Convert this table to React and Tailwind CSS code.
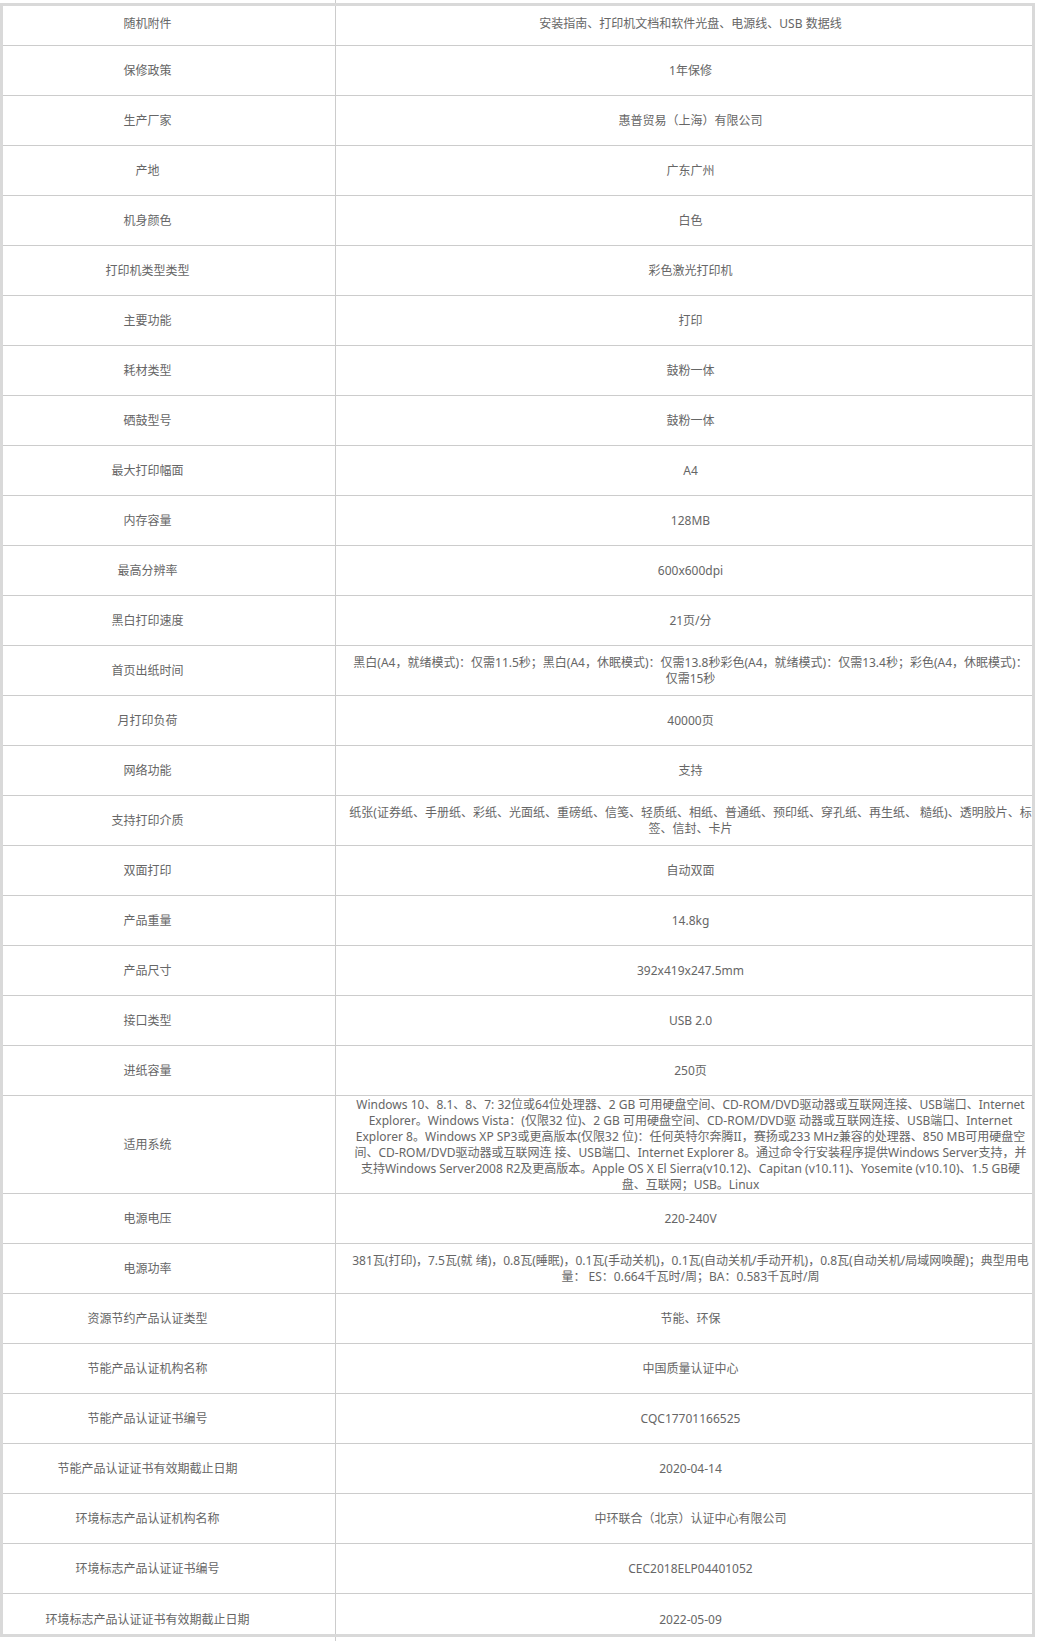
import React from "react";

const rows = [
  ["随机附件", "安装指南、打印机文档和软件光盘、电源线、USB 数据线"],
  ["保修政策", "1年保修"],
  ["生产厂家", "惠普贸易（上海）有限公司"],
  ["产地", "广东广州"],
  ["机身颜色", "白色"],
  ["打印机类型类型", "彩色激光打印机"],
  ["主要功能", "打印"],
  ["耗材类型", "鼓粉一体"],
  ["硒鼓型号", "鼓粉一体"],
  ["最大打印幅面", "A4"],
  ["内存容量", "128MB"],
  ["最高分辨率", "600x600dpi"],
  ["黑白打印速度", "21页/分"],
  ["首页出纸时间", "黑白(A4，就绪模式)：仅需11.5秒；黑白(A4，休眠模式)：仅需13.8秒彩色(A4，就绪模式)：仅需13.4秒；彩色(A4，休眠模式)：仅需15秒"],
  ["月打印负荷", "40000页"],
  ["网络功能", "支持"],
  ["支持打印介质", "纸张(证券纸、手册纸、彩纸、光面纸、重磅纸、信笺、轻质纸、相纸、普通纸、预印纸、穿孔纸、再生纸、 糙纸)、透明胶片、标签、信封、卡片"],
  ["双面打印", "自动双面"],
  ["产品重量", "14.8kg"],
  ["产品尺寸", "392x419x247.5mm"],
  ["接口类型", "USB 2.0"],
  ["进纸容量", "250页"],
  ["适用系统", "Windows 10、8.1、8、7: 32位或64位处理器、2 GB 可用硬盘空间、CD-ROM/DVD驱动器或互联网连接、USB端口、Internet Explorer。Windows Vista：(仅限32 位)、2 GB 可用硬盘空间、CD-ROM/DVD驱 动器或互联网连接、USB端口、Internet Explorer 8。Windows XP SP3或更高版本(仅限32 位)：任何英特尔奔腾II，赛扬或233 MHz兼容的处理器、850 MB可用硬盘空间、CD-ROM/DVD驱动器或互联网连 接、USB端口、Internet Explorer 8。通过命令行安装程序提供Windows Server支持，并支持Windows Server2008 R2及更高版本。Apple OS X El Sierra(v10.12)、Capitan (v10.11)、Yosemite (v10.10)、1.5 GB硬盘、互联网；USB。Linux"],
  ["电源电压", "220-240V"],
  ["电源功率", "381瓦(打印)，7.5瓦(就 绪)，0.8瓦(睡眠)，0.1瓦(手动关机)，0.1瓦(自动关机/手动开机)，0.8瓦(自动关机/局域网唤醒)；典型用电量： ES：0.664千瓦时/周；BA：0.583千瓦时/周"],
  ["资源节约产品认证类型", "节能、环保"],
  ["节能产品认证机构名称", "中国质量认证中心"],
  ["节能产品认证证书编号", "CQC17701166525"],
  ["节能产品认证证书有效期截止日期", "2020-04-14"],
  ["环境标志产品认证机构名称", "中环联合（北京）认证中心有限公司"],
  ["环境标志产品认证证书编号", "CEC2018ELP04401052"],
  ["环境标志产品认证证书有效期截止日期", "2022-05-09"],
];

function Row({ label, value, index, total }) {
  const first = index === 0;
  const last = index === total - 1;
  const tall = label === "适用系统";
  const h = first
    ? "h-[39px] pb-[4px]"
    : last
    ? "h-[40px] pt-[12px]"
    : tall
    ? "h-[97px]"
    : "h-[49px]";
  const border = last ? "" : "border-b border-[#cccccc]";
  return (
    <div className={`flex ${border}`}>
      <div className={`w-[333px] shrink-0 border-r border-[#cccccc] flex items-center justify-center text-center pr-[43px] ${h}`}>
        {label}
      </div>
      <div className={`flex-1 min-w-0 flex items-center justify-center text-center pl-[13px] ${h}`}>
        <span>{value}</span>
      </div>
    </div>
  );
}

export default function App() {
  return (
    <div
      className="w-[1037px] h-[1641px] bg-white text-[12px] leading-[16px] text-[#666666] overflow-hidden"
      style={{ fontFamily: '"Microsoft YaHei", "Noto Sans", "Noto Sans CJK SC", sans-serif' }}
    >
      <div className="h-[3px] flex">
        <div className="ml-[335px] w-px bg-[#cccccc]" />
      </div>
      <div className="w-[1035px] border-[3px] border-[#d9d9d9]">
        {rows.map((r, i) => (
          <Row key={i} label={r[0]} value={r[1]} index={i} total={rows.length} />
        ))}
      </div>
      <div className="h-[4px] flex">
        <div className="ml-[335px] w-px bg-[#cccccc]" />
      </div>
    </div>
  );
}
